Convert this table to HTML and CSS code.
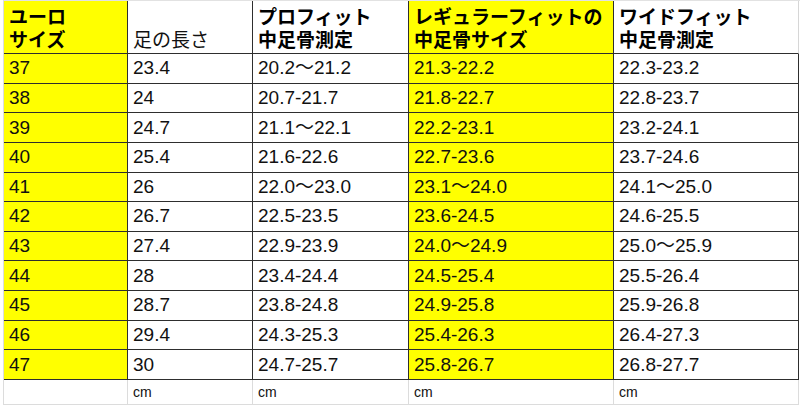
FILE: index.html
```html
<!DOCTYPE html>
<html lang="ja">
<head>
<meta charset="utf-8">
<title>サイズ表</title>
<link rel="stylesheet" href="styles.css">
</head>
<body>
<div class="sheet">
  <div class="c h y b">ユーロ<br>サイズ</div>
  <div class="c h">足の長さ</div>
  <div class="c h b">プロフィット<br>中足骨測定</div>
  <div class="c h y b">レギュラーフィットの<br>中足骨サイズ</div>
  <div class="c h b last">ワイドフィット<br>中足骨測定</div>

  <div class="c y">37</div><div class="c">23.4</div><div class="c">20.2～21.2</div><div class="c y">21.3-22.2</div><div class="c">22.3-23.2</div>
  <div class="c y">38</div><div class="c">24</div><div class="c">20.7-21.7</div><div class="c y">21.8-22.7</div><div class="c">22.8-23.7</div>
  <div class="c y">39</div><div class="c">24.7</div><div class="c">21.1～22.1</div><div class="c y">22.2-23.1</div><div class="c">23.2-24.1</div>
  <div class="c y">40</div><div class="c">25.4</div><div class="c">21.6-22.6</div><div class="c y">22.7-23.6</div><div class="c">23.7-24.6</div>
  <div class="c y">41</div><div class="c">26</div><div class="c">22.0～23.0</div><div class="c y">23.1～24.0</div><div class="c">24.1～25.0</div>
  <div class="c y">42</div><div class="c">26.7</div><div class="c">22.5-23.5</div><div class="c y">23.6-24.5</div><div class="c">24.6-25.5</div>
  <div class="c y">43</div><div class="c">27.4</div><div class="c">22.9-23.9</div><div class="c y">24.0～24.9</div><div class="c">25.0～25.9</div>
  <div class="c y">44</div><div class="c">28</div><div class="c">23.4-24.4</div><div class="c y">24.5-25.4</div><div class="c">25.5-26.4</div>
  <div class="c y">45</div><div class="c">28.7</div><div class="c">23.8-24.8</div><div class="c y">24.9-25.8</div><div class="c">25.9-26.8</div>
  <div class="c y">46</div><div class="c">29.4</div><div class="c">24.3-25.3</div><div class="c y">25.4-26.3</div><div class="c">26.4-27.3</div>
  <div class="c y">47</div><div class="c">30</div><div class="c">24.7-25.7</div><div class="c y">25.8-26.7</div><div class="c">26.8-27.7</div>

  <div class="c u"></div><div class="c u">cm</div><div class="c u">cm</div><div class="c u">cm</div><div class="c u">cm</div>
</div>
</body>
</html>
```

FILE: styles.css
```css
html, body {
  margin: 0;
  padding: 0;
  background: #ffffff;
}

.sheet {
  margin-left: 3px;
  display: grid;
  grid-template-columns: 124px 125px 156px 205px 185px;
  grid-template-rows: 53px repeat(11, 29.636px) 25px;
  border-left: 1px solid #dcdcdc;
  border-top: 1px solid #e2e2e2;
  font-family: "Liberation Sans", "Noto Sans CJK JP", sans-serif;
  font-size: 19px;
  color: #111111;
}

.c {
  box-sizing: border-box;
  border-right: 1px solid #2e2e2e;
  border-bottom: 1px solid #2e2e2e;
  padding-left: 5px;
  display: flex;
  align-items: center;
  line-height: 22px;
  white-space: nowrap;
  overflow: hidden;
}

.h {
  align-items: flex-end;
  padding-bottom: 3px;
  line-height: 23px;
  font-family: "Noto Sans CJK JP", "Liberation Sans", sans-serif;
}

.h.last {
  border-right-color: #d6d6d6;
}

.b {
  font-weight: 700;
  color: #000000;
}

.y {
  background: #ffff00;
}

.u {
  border-right-color: #dcdcdc;
  border-bottom-color: #dcdcdc;
  font-size: 14px;
  align-items: flex-end;
  padding-bottom: 4px;
  line-height: 16px;
}
```
